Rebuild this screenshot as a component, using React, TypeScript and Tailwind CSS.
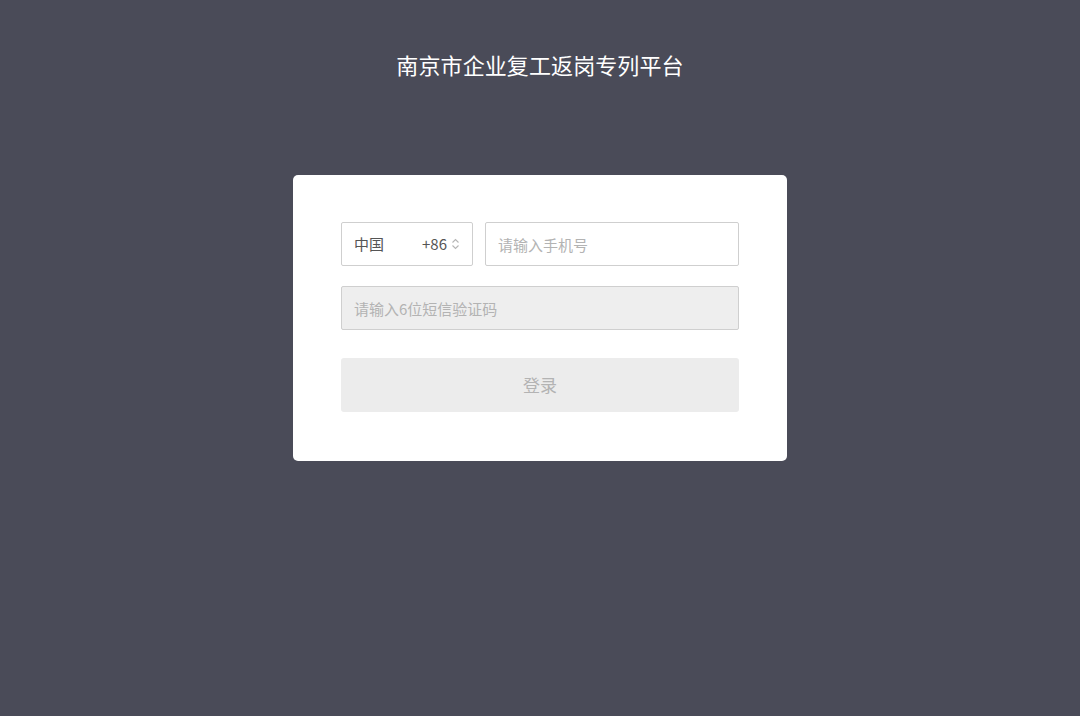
export default function App() {
  return (
    <div className="min-h-screen w-full bg-[#4a4b58] flex flex-col items-center font-['Noto_Sans_CJK_SC','Noto_Sans',sans-serif]">
      {/* Title */}
      <h1 className="mt-[49px] text-[22px] leading-[30px] tracking-[0.1px] text-white">
        南京市企业复工返岗专列平台
      </h1>

      {/* Login card */}
      <div className="mt-[96px] w-[494px] rounded-[5px] bg-white px-[48px] pt-[47px] pb-[49px]">
        <div className="flex gap-[12px]">
          <div className="flex h-[44px] w-[132px] items-center rounded-[2px] border border-[#cfcfcf] pl-[12px] pr-[12px] text-[15px] text-[#555]">
            <span>中国</span>
            <span className="ml-auto">+86</span>
            <svg className="ml-[4px]" width="9" height="12" viewBox="0 0 9 12" fill="none" stroke="#b5b5b5" strokeWidth="1.1">
              <path d="M1.5 4.5 L4.5 1.5 L7.5 4.5" />
              <path d="M1.5 7.5 L4.5 10.5 L7.5 7.5" />
            </svg>
          </div>
          <input
            className="h-[44px] flex-1 rounded-[2px] border border-[#cfcfcf] px-[12px] text-[15px] text-[#555] outline-none placeholder:text-[#b3b3b3]"
            placeholder="请输入手机号"
          />
        </div>

        <input
          className="mt-[20px] block h-[44px] w-full rounded-[2px] border border-[#cfcfcf] bg-[#eeeeee] px-[12px] text-[15px] text-[#555] outline-none placeholder:text-[#b3b3b3]"
          placeholder="请输入6位短信验证码"
          disabled
        />

        <button className="mt-[28px] flex h-[54px] w-full items-center justify-center rounded-[3px] bg-[#ececec] text-[17px] text-[#b3b3b3]">
          登录
        </button>
      </div>
    </div>
  )
}
